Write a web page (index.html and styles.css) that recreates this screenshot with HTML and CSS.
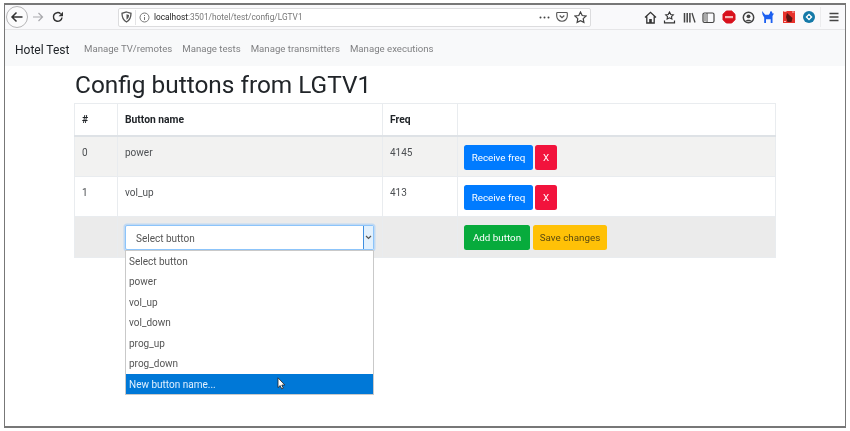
FILE: index.html
```html
<!DOCTYPE html>
<html lang="en">
<head>
<meta charset="utf-8">
<title>Hotel Test</title>
<link rel="stylesheet" href="styles.css">
</head>
<body>
<div class="frame">
  <header class="toolbar">
    <span class="back"><svg width="14" height="14" viewBox="0 0 14 14"><path d="M12.500 7H2M6.500 2.500 2 7l4.500 4.500" fill="none" stroke="#333" stroke-width="1.500"/></svg></span>
    <svg class="tb forward" width="12" height="12" viewBox="0 0 12 12"><path d="M1 6h9.500M6.500 2l4 4-4 4" fill="none" stroke="#a9a9ad" stroke-width="1.200"/></svg>
    <svg class="tb reload" width="12" height="12" viewBox="0 0 12 12"><path d="M10 6.500A4.300 4.300 0 1 1 8.600 2.700" fill="none" stroke="#333" stroke-width="1.500"/><path d="M11 .8v4.400H6.600z" fill="#333"/></svg>
    <div class="urlbar">
      <svg class="shield" width="11" height="12" viewBox="0 0 11 12"><path d="M5.500 1 10 2.300c0 4-1 7-4.500 8.700C2 9.300 1 6.300 1 2.300z" fill="none" stroke="#555" stroke-width="1.300"/><path d="M5.500 3.300 8 4c0 2-.6 3.700-2.500 4.800z" fill="#555"/></svg>
      <span class="divider"></span>
      <svg class="info" width="11" height="11" viewBox="0 0 11 11"><circle cx="5.500" cy="5.500" r="4.500" fill="none" stroke="#777"/><path d="M5.500 5v3M5.500 3v1" stroke="#777"/></svg>
      <span class="url"><b>localhost</b>:3501/hotel/test/config/LGTV1</span>
      <span class="url-actions">
        <svg width="11" height="3" viewBox="0 0 11 3"><circle cx="1.500" cy="1.500" r="1" fill="#444"/><circle cx="5.500" cy="1.500" r="1" fill="#444"/><circle cx="9.500" cy="1.500" r="1" fill="#444"/></svg>
        <svg width="12" height="12" viewBox="0 0 12 12"><path d="M1.500 1.500h9a.8.8 0 0 1 .8.8V5a5.300 5.300 0 0 1-10.600 0V2.300a.8.8 0 0 1 .8-.8z" fill="none" stroke="#555" stroke-width="1.100"/><path d="M3.700 4.500 6 6.700l2.300-2.200" fill="none" stroke="#555" stroke-width="1.200"/></svg>
        <svg width="13" height="13" viewBox="0 0 13 13"><path d="m6.500 1 1.700 3.500 3.800.5-2.800 2.600.7 3.800-3.400-1.800-3.400 1.800.7-3.800L1 5l3.800-.5z" fill="none" stroke="#444" stroke-width="1.200"/></svg>
      </span>
    </div>
    <div class="tools">
      <svg width="13" height="13" viewBox="0 0 13 13"><path d="M1 6.500 6.500 1.300 12 6.500M2.800 5.500V12h7.400V5.500" fill="none" stroke="#333" stroke-width="1.300"/><path d="M5.200 12V8h2.600v4" fill="#333"/></svg>
      <svg width="13" height="13" viewBox="0 0 13 13"><path d="m6.500 1 1.300 2.500 2.500.4-1.800 1.700.4 2.400-2.400-1.200L4.100 8l.4-2.400-1.800-1.700 2.500-.4z" fill="none" stroke="#333" stroke-width="1.100"/><path d="M1.500 9.500v2.300h10V9.500" fill="none" stroke="#333" stroke-width="1.200"/></svg>
      <svg width="13" height="13" viewBox="0 0 13 13"><path d="M1.500 2v9.500M4.200 2v9.500M6.900 2v9.500" stroke="#444" stroke-width="1.500"/><path d="m9 2 3 9.500" stroke="#444" stroke-width="1.300"/></svg>
      <svg width="13" height="13" viewBox="0 0 13 13"><rect x="1" y="2" width="11" height="9.500" rx="1.500" fill="none" stroke="#444" stroke-width="1.200"/><path d="M5 2v9.500" stroke="#444"/><rect x="2" y="3" width="3" height="7.500" fill="#aaa"/></svg>
      <svg width="14" height="14" viewBox="0 0 14 14"><path d="M4.300 1h5.400L13 4.300v5.400L9.700 13H4.300L1 9.700V4.300z" fill="#d8101c" stroke="#d8101c" stroke-linejoin="round"/><path d="M3 6h8v2.200H3z" fill="#f6b4b4"/></svg>
      <svg width="13" height="13" viewBox="0 0 13 13"><circle cx="6.500" cy="6.500" r="5.200" fill="none" stroke="#444" stroke-width="1.500"/><circle cx="6.500" cy="5.300" r="1.900" fill="#444"/><path d="M3.300 10.300c.6-2 5.800-2 6.400 0z" fill="#444"/></svg>
      <svg width="14" height="14" viewBox="0 0 14 14"><path d="m1 1 3.200 3.700h3.600L9 3V1l1 1 .8-1 .7 2.500H13L11.500 6v7H9.700V9.300H5V13H3.200V7.500L1.500 4.500z" fill="#1c5ff0"/></svg>
      <svg width="14" height="14" viewBox="0 0 14 14"><rect x="1" y="1" width="12" height="12" fill="#e8322c"/><path d="M5 3 10.500 8l-1 4H5.500L4 7z" fill="#5c1512"/><path d="M1.500 1.500h3M10 2h2.500M2 11.500h2" stroke="#f9c3c0"/></svg>
      <svg width="14" height="14" viewBox="0 0 14 14"><circle cx="7" cy="7" r="6" fill="#1479a8"/><path d="M7 3.500 10.500 7 7 10.500 3.500 7z" fill="#fff"/><circle cx="7" cy="7" r="1.300" fill="#1479a8"/></svg>
    </div>
    <span class="tool-sep"></span>
    <svg class="menu" width="12" height="12" viewBox="0 0 12 12"><path d="M1.500 2.500h9M1.500 6h9M1.500 9.500h9" stroke="#444" stroke-width="1.400"/></svg>
  </header>

  <nav class="navbar">
    <a class="brand">Hotel Test</a>
    <a class="nav-link">Manage TV/remotes</a>
    <a class="nav-link">Manage tests</a>
    <a class="nav-link">Manage transmitters</a>
    <a class="nav-link">Manage executions</a>
  </nav>

  <main class="content">
    <h1>Config buttons from LGTV1</h1>
    <table class="grid">
      <colgroup><col class="c-id"><col class="c-name"><col class="c-freq"><col></colgroup>
      <thead>
        <tr><th>#</th><th>Button name</th><th>Freq</th><th></th></tr>
      </thead>
      <tbody>
        <tr class="odd">
          <td>0</td><td>power</td><td>4145</td>
          <td><div class="actions"><button class="btn blue">Receive freq</button><button class="btn red">X</button></div></td>
        </tr>
        <tr>
          <td>1</td><td>vol_up</td><td>413</td>
          <td><div class="actions"><button class="btn blue">Receive freq</button><button class="btn red">X</button></div></td>
        </tr>
        <tr class="add">
          <td></td>
          <td>
            <div class="select-wrap">
              <div class="select"><span>Select button</span><span class="arrow"><svg width="7" height="5" viewBox="0 0 7 5"><path d="M1 1l2.500 2.500L6 1" fill="none" stroke="#555" stroke-width="1.200"/></svg></span></div>
              <ul class="options">
                <li>Select button</li>
                <li>power</li>
                <li>vol_up</li>
                <li>vol_down</li>
                <li>prog_up</li>
                <li>prog_down</li>
                <li class="hot">New button name...<svg class="cursor" width="9" height="13" viewBox="0 0 9 13"><path d="M1 .8v9.800l2.200-2 1.500 3.300 1.600-.7-1.500-3.200h3z" fill="#fff" stroke="#222" stroke-width=".8"/></svg></li>
              </ul>
            </div>
          </td>
          <td></td>
          <td><div class="actions wide"><button class="btn green">Add button</button><button class="btn amber">Save changes</button></div></td>
        </tr>
      </tbody>
    </table>
  </main>
</div>
</body>
</html>
```

FILE: styles.css
```css
* { box-sizing: border-box; }
html, body { margin: 0; padding: 0; background: #fff; }
body {
  width: 850px;
  height: 431px;
  overflow: hidden;
  padding: 3px 4px;
  font-family: Roboto, "Open Sans", sans-serif;
  color: #212529;
}
.frame {
  width: 842px;
  height: 425px;
  border: 1px solid #777;
  border-bottom-width: 2px;
  border-top-width: 2px;
  background: #fff;
  display: flex;
  flex-direction: column;
  filter: blur(0.3px);
}
.toolbar {
  height: 25px;
  flex: none;
  background: #f9f9fb;
  border-bottom: 1px solid #e6e6e8;
  display: flex;
  align-items: center;
}
.back {
  width: 22px;
  height: 22px;
  margin-left: 1px;
  border: 1px solid #b5b5b7;
  border-radius: 50%;
  background: #fbfbfc;
  display: flex;
  align-items: center;
  justify-content: center;
}
.tb { flex: none; }
.forward { margin-left: 4px; }
.reload { margin-left: 8px; }
.urlbar {
  margin-left: 54px;
  width: 473px;
  height: 19px;
  background: #fff;
  border: 1px solid #dcdcde;
  border-radius: 2px;
  display: flex;
  align-items: center;
  padding-left: 2px;
}
.divider { width: 1px; height: 15px; background: #e4e4e6; margin: 0 3px; }
.url { margin-left: 4px; font-size: 8.300px; color: #777; white-space: nowrap; }
.url b { font-weight: 400; color: #222; }
.url-actions {
  margin-left: auto;
  margin-right: 3px;
  display: flex;
  align-items: center;
  gap: 6px;
}
.tools {
  margin-left: 53px;
  width: 172px;
  display: flex;
  align-items: center;
  justify-content: space-between;
}
.tool-sep { width: 1px; height: 20px; background: #ececee; margin-left: 4px; }
.menu { margin-left: 7px; }

.navbar {
  height: 36px;
  flex: none;
  background: #f8f9fa;
  display: flex;
  align-items: center;
  padding-left: 10px;
}
.brand { font-size: 12px; width: 69px; padding-top: 3px; color: #212529; }
.nav-link { font-size: 9.650px; padding-top: 1px; color: #808183; margin-right: 10px; }

.content { width: 702px; margin: 0 auto; }
h1 {
  margin: 0;
  height: 37px;
  padding-left: 1px;
  font-size: 24.400px;
  line-height: 37px;
  font-weight: 400;
  color: #212529;
}
.grid {
  width: 702px;
  table-layout: fixed;
  border-collapse: collapse;
  font-size: 10px;
  line-height: 14px;
}
.c-id { width: 43px; }
.c-name { width: 265px; }
.c-freq { width: 75px; }
th, td {
  border: 1px solid #e9ecef;
  padding: 8px 8px 6px 7px;
  text-align: left;
  vertical-align: top;
  color: #4c4f52;
}
th { height: 32px; padding-top: 9px; font-size: 10.300px; color: #212529; font-weight: 700; border-bottom: 2px solid #dee2e6; }
td { height: 40.400px; padding-top: 9.300px; }
.odd td { background: #f2f2f1; }
.add td { height: 41.500px; background: #ebebeb; }
.actions { display: flex; gap: 2px; margin: -1.300px 0 0 -1px; }
.actions.wide { gap: 3px; }
.btn {
  height: 25px;
  border: 0;
  border-radius: 2.500px;
  padding: 1px 0 0;
  font: inherit;
  font-size: 9.800px;
  color: #fff;
}
.blue { background: #007bff; width: 69px; }
.red { background: #f2133c; width: 22px; }
.green { background: #07ab3c; width: 66px; }
.amber { background: #ffc107; color: #5c4a10; width: 74px; }

.select-wrap { position: relative; height: 25px; margin-top: -1.300px; }
.select {
  height: 25px;
  background: #fff;
  border: 1px solid #8cc4fa;
  box-shadow: 0 0 0 1.500px rgba(128, 189, 255, .4);
  border-radius: 2px;
  display: flex;
  align-items: center;
  justify-content: space-between;
  padding: 0 0 0 10px;
  color: #555;
}
.select > span:first-child { padding-top: 3px; }
.arrow {
  width: 10px;
  height: 23px;
  background: #e3f1fd;
  border-left: 1px solid #3f8fe0;
  display: flex;
  align-items: center;
  justify-content: center;
}
.options {
  position: absolute;
  top: 25px;
  left: 0;
  width: 100%;
  margin: 0;
  padding: 0;
  list-style: none;
  background: #fff;
  border: 1px solid #c9c9c9;
  color: #555;
  z-index: 2;
}
.options li { height: 20.500px; line-height: 21.500px; padding-left: 3px; position: relative; }
.options .hot { background: #0078d7; color: #dff0ff; }
.cursor { position: absolute; left: 151px; top: 3px; }
```
